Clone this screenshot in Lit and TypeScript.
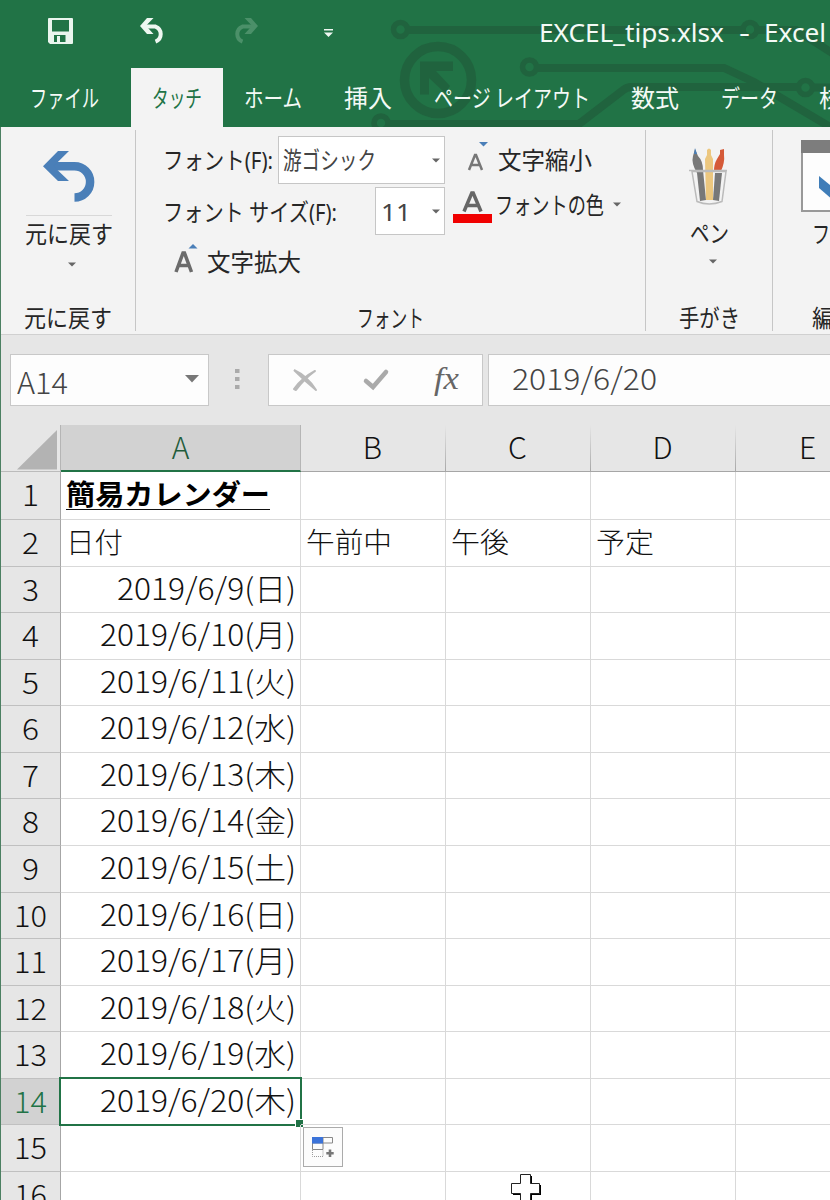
import { LitElement, html, css, svg } from "lit";
import { customElement, property } from "lit/decorators.js";

/** A single line of text whose advance width is set in pixels. */
@customElement("fit-text")
class FitText extends LitElement {
  @property({ type: Number }) w = 100;
  static styles = css`
    :host { display: block; flex: none; white-space: nowrap; overflow: visible; }
    .t { display: inline-block; transform-origin: 0 50%; white-space: pre; }
  `;
  render() {
    return html`<div style="width:${this.w}px"><span class="t"><slot></slot></span></div>`;
  }
  firstUpdated() {
    const t = this.renderRoot.querySelector(".t") as HTMLElement;
    const fit = () => {
      t.style.transform = "none";
      const n = t.getBoundingClientRect().width;
      if (n) t.style.transform = `scaleX(${this.w / n})`;
    };
    fit();
    document.fonts.ready.then(fit);
  }
}

const days: [string, number][] = [
  ["2019/6/9(日)", 179], ["2019/6/10(月)", 196], ["2019/6/11(火)", 196], ["2019/6/12(水)", 196],
  ["2019/6/13(木)", 196], ["2019/6/14(金)", 196], ["2019/6/15(土)", 196], ["2019/6/16(日)", 196],
  ["2019/6/17(月)", 196], ["2019/6/18(火)", 196], ["2019/6/19(水)", 196], ["2019/6/20(木)", 196],
];

const caret = html`<svg class="caret" width="8" height="5" viewBox="0 0 8 5"><path d="M0 .5H8L4 4.5Z" fill="#666"/></svg>`;

@customElement("app-root")
class AppRoot extends LitElement {
  static styles = css`
    :host { display: block; width: 830px; height: 1200px; overflow: hidden; background: #fff;
      font-family: "Noto Sans", "Noto Sans CJK JP", sans-serif; color: #262626; }
    * { box-sizing: border-box; }
    svg { display: block; flex: none; overflow: visible; }
    .head { position: relative; height: 127px; background: #217346; color: #f4faf6; overflow: hidden; }
    .circuit { position: absolute; left: 0; top: 0; }
    .bar { position: relative; display: flex; height: 68px; align-items: flex-start; }
    .save { margin: 18px 0 0 48px; }
    .undo { margin: 18px 0 0 67px; }
    .redo { margin: 18px 0 0 66px; }
    .more { margin: 29px 0 0 66px; }
    .title { display: flex; margin: 14px 0 0 206px; font-size: 25px; line-height: 36px; }
    .dash { margin-left: 15px; }
    .app { margin-left: 14px; }
    .tabs { position: relative; display: flex; height: 59px; line-height: 57px; font-size: 24px;
      font-family: "Noto Sans CJK JP", sans-serif; }
    .tab { flex: none; display: flex; }
    .tab.file { width: 131px; padding-left: 30px; }
    .tab.on { width: 92px; padding-left: 21px; background: #f3f3f3; color: #217346; }
    .tab.home { width: 121px; padding-left: 21px; }
    .tab.ins { width: 90px; }
    .tab.page { width: 197px; }
    .tab.form { width: 90px; }
    .tab.data { width: 98px; }
    .body { border-left: 1px solid #4c8062; }
    .ribbon { display: flex; height: 208px; background: #f3f3f3; border-bottom: 1px solid #d0d0d0; padding-top: 3px; font-size: 24px; line-height: 34px; }
    .g { flex: none; height: 201px; border-right: 1px solid #c6c6c6; display: flex; flex-direction: column; }
    .g1 { width: 135px; }
    .g2 { width: 510px; }
    .g3 { width: 127px; }
    .g4 { width: 58px; border: 0; }
    .undobig { margin: 21px 0 0 42px; }
    .rule { height: 1px; width: 86px; margin: 13px 0 0 25px; background: #d8d8d8; }
    .b1 { margin: 1px 0 0 24px; }
    .g1 .caret { margin: 11px 0 0 67px; }
    .lab { margin-top: auto; margin-bottom: -4px; }
    .g1 .lab { padding-left: 23px; }
    .g2 .lab { padding-left: 221px; }
    .g3 .lab { padding-left: 33px; }
    .g4 .lab { padding-left: 39px; }
    .cols { display: flex; }
    .left { width: 309px; flex: none; }
    .line1 { display: flex; height: 54px; padding: 6px 0 0 27px; justify-content: space-between; }
    .line1 > fit-text { margin-top: 7px; }
    .line2 { display: flex; height: 54px; padding: 3px 0 0 27px; justify-content: space-between; }
    .line2 .l { margin-top: 8px; }
    .line3 { display: flex; padding: 5px 0 0 38px; }
    .line3 fit-text { margin-left: 10px; margin-top: 2px; }
    .box { display: flex; height: 48px; border: 1px solid #c6c6c6; background: #fff; justify-content: space-between; color: #444; }
    .box .caret { margin: 21px 4px 0 0; }
    .box.name { width: 167px; padding-left: 4px; }
    .box.name fit-text { margin-top: 6px; }
    .box.size { width: 70px; padding-left: 5px; }
    .box.size fit-text { margin-top: 7px; }
    .right { padding-left: 8px; }
    .r1 { display: flex; padding: 12px 0 0 14px; }
    .r1 fit-text { margin: 1px 0 0 11px; }
    .r2 { display: flex; padding-top: 12px; }
    .r2 fit-text { margin-left: 3px; margin-top: -1px; }
    .r2 .caret { margin: 13px 0 0 9px; }
    .pens { margin: 17px 0 0 43px; }
    .g3 .b { margin: 11px 0 0 44px; }
    .g3 .caret { margin: 9px 0 0 63px; }
    .win { margin: 10px 0 0 28px; }
    .g4 .b { margin: 5px 0 0 39px; }
    .fbar { display: flex; height: 90px; background: #e6e6e6; padding: 19px 0 0 9px; color: #444;
      font-family: "Noto Sans CJK JP", sans-serif; font-weight: 300; font-size: 30px; line-height: 50px; }
    .fb { height: 52px; border: 1px solid #c8c8c8; background: #fdfdfd; display: flex; flex: none; }
    .nm { width: 199px; padding: 1px 9px 0 6px; justify-content: space-between; }
    .nm svg { margin-top: 19px; }
    .dots { margin: 15px 0 0 26px; }
    .ops { width: 215px; margin-left: 28px; padding-left: 24px; }
    .ops .x { margin-top: 14px; }
    .ops .c { margin: 15px 0 0 47px; }
    .fx { font: italic 31px/48px "Liberation Serif", serif; color: #666; margin-left: 46px; }
    .val { width: 400px; margin-left: 5px; padding-left: 23px; }
    .val fit-text { margin-top: -3px; }
    .sheet { display: grid; grid-template-columns: 60px 240px 145px 145px 145px 145px; grid-template-rows: 47px 48px;
      grid-auto-rows: 46.57px; font-family: "Noto Sans CJK JP", sans-serif; font-weight: 300; font-size: 30px; color: #111; width: 880px; margin-left: -1px; border-left: 1px solid #4c8062; }
    .ch { background: linear-gradient(#e6e6e6,#a8a8a8) right / 1px 100% no-repeat #e6e6e6; border-bottom: 1px solid #a6a6a6;
      line-height: 42px; text-align: center; font-size: 30px; padding-right: 2px; }
    .ch.on { background: #d2d2d2; border-bottom: 2px solid #217346; border-right: 1px solid #b5b5b5; color: #1f5c3b; padding: 0; }
    .corner { background: #e6e6e6; border-right: 1px solid #b5b5b5; border-bottom: 1px solid #bbb; padding: 5px 0 0 16px; }
    .rh { background: #e6e6e6; border-right: 1px solid #a6a6a6; border-bottom: 1px solid #c0c0c0; display: flex; justify-content: center; line-height: 42px; }
    .rh.on { background: #d2d2d2; color: #217346; }
    .cell { border-right: 1px solid #d9d9d9; border-bottom: 1px solid #d9d9d9; line-height: 40px; position: relative; }
    .date { display: flex; justify-content: flex-end; padding-right: 4px; }
    .txt { padding-left: 5px; font-size: 28px; line-height: 42px; }
    .head1 { font-weight: 700; font-size: 28px; padding-left: 5px; color: #000; line-height: 43px; }
    .head1 fit-text { width: 204px; height: 38px; border-bottom: 1px solid #111; }
    .sel { position: absolute; left: -2px; top: -2px; right: -2px; bottom: -2px; border: 2px solid #217346; }
    .knob { position: absolute; right: -3px; bottom: -3px; width: 8px; height: 8px; background: #217346; border: solid #fff; border-width: 1px 0 0 1px; }
    .fill { position: absolute; left: 2px; top: 2px; width: 40px; height: 40px; border: 1px solid #ababab; background: #fcfcfc; z-index: 2; padding: 9px 0 0 8px; }
    .cursor { position: absolute; left: 64px; top: 1px; z-index: 3; }
  `;

  cell(r: number, c: number) {
    if (c === 0) {
      if (r === 1) return html`<div class="cell head1"><fit-text w="204">簡易カレンダー</fit-text></div>`;
      if (r === 2) return html`<div class="cell txt"><fit-text w="57">日付</fit-text></div>`;
      if (r >= 3 && r <= 14) {
        const [s, w] = days[r - 3];
        return html`<div class="cell date"><fit-text .w=${w}>${s}</fit-text>${r === 14 ? html`<div class="sel"></div><div class="knob"></div>` : ""}</div>`;
      }
    }
    if (r === 2 && c < 4) return html`<div class="cell txt"><fit-text .w=${c === 1 ? 86 : 58}>${["", "午前中", "午後", "予定"][c]}</fit-text></div>`;
    if (r === 15 && c === 1)
      return html`<div class="cell"><div class="fill"><svg width="24" height="22" viewBox="0 0 24 22" fill="none" stroke="#999">
        <path d="M.5 .5H20.500V6H.5ZM.5 6V12.500H11V.5" stroke="#888"/><path d="M0 0H11V6.500H0Z" fill="#3b73d9" stroke="none"/>
        <path d="M.5 13V19.500H11V13" stroke-dasharray="1 1"/><path d="M18 12.500V20M14.300 16.200H21.700" stroke="#777" stroke-width="2.600"/></svg></div></div>`;
    if (r === 16 && c === 2)
      return html`<div class="cell"><svg class="cursor" width="32" height="32" viewBox="0 0 32 32">
        <path d="M12 3H22V12H31V22H22V31H12V22H3V12H12Z" fill="#000"/><path d="M10.500 1.500H20.500V10.500H29.500V20.500H20.500V29.500H10.500V20.500H1.500V10.500H10.500Z" fill="#fff" stroke="#222"/></svg></div>`;
    return html`<div class="cell"></div>`;
  }

  render() {
    const rows = Array.from({ length: 16 }, (_, i) => i + 1);
    const ring = (x: number, y: number) => svg`<circle cx=${x} cy=${y} r="7" stroke-width="5.500"/>`;
    return html`
      <div class="head">
        <svg class="circuit" width="830" height="127" fill="none" stroke="#20633e" stroke-width="8">
          ${ring(400.5, 29.5)}${ring(750, 29.5)}${ring(529.5, 67)}${ring(805.500, 87.500)}${ring(381, 123)}
          <path d="M408 30H743M757 30H796L832 53M537 68H724L754 82L832 128M387 124H579L622 91Q626 87 632 87H799M813 87.500H830"/>
          <circle cx="438" cy="80" r="33.500" stroke-width="9.500"/>
          <path d="M420 61.500H453V71H436L450 86L445 93L429 78V94.500H420Z" fill="#20633e" stroke="none"/>
        </svg>
        <div class="bar">
          <svg class="save" width="25" height="26" viewBox="0 0 25 26"><path fill="#eaf5ee" fill-rule="evenodd" d="M1 0H24Q25 0 25 1V25Q25 26 24 26H2L0 24V1Q0 0 1 0ZM4 2V13.500H21V2ZM6 17V24H9V18H12V24H17.500V17Z"/></svg>
          <svg class="undo" width="26" height="26" viewBox="0 0 26 26" fill="none" stroke="#eef7f1"><path d="M4 8.500H15.500A8 8 0 0 1 15.500 23.500" stroke-width="4"/><path d="M7 0H13.500L6 7.800L13.500 16H7L0 8Z" fill="#eef7f1" stroke="none"/></svg>
          <svg class="redo" width="26" height="26" viewBox="0 0 26 26" fill="none" stroke="#4b9069"><path d="M22 8.500H10.500A8 8 0 0 0 10.500 23.500" stroke-width="4"/><path d="M19 0H12.500L20 7.800L12.500 16H19L26 8Z" fill="#4b9069" stroke="none"/></svg>
          <svg class="more" width="9" height="9" viewBox="0 0 9 9" fill="#eef7f1"><path d="M0 0H9V1.500H0ZM0 3.500H9L4.500 8Z"/></svg>
          <div class="title"><fit-text w="185">EXCEL_tips.xlsx</fit-text><fit-text class="dash" w="11">-</fit-text><fit-text class="app" w="62">Excel</fit-text></div>
        </div>
        <div class="tabs">
          <div class="tab file"><fit-text w="69">ファイル</fit-text></div>
          <div class="tab on"><fit-text w="50">タッチ</fit-text></div>
          <div class="tab home"><fit-text w="58">ホーム</fit-text></div>
          <div class="tab ins"><fit-text w="48">挿入</fit-text></div>
          <div class="tab page"><fit-text w="156">ページ レイアウト</fit-text></div>
          <div class="tab form"><fit-text w="48">数式</fit-text></div>
          <div class="tab data"><fit-text w="57">データ</fit-text></div>
          <div class="tab"><fit-text w="48">校閲</fit-text></div>
        </div>
      </div>
      <div class="body">
        <div class="ribbon">
          <div class="g g1">
            <svg class="undobig" width="51" height="51" viewBox="0 0 51 51"><path d="M10 15.300H31.500A15.300 15.300 0 0 1 31.500 46.500" fill="none" stroke="#4a7fb8" stroke-width="8.500"/><path d="M15 0H26L10.500 15.300L26 30H15L0 15.300Z" fill="#4a7fb8"/></svg>
            <div class="rule"></div>
            <fit-text class="b1" w="88">元に戻す</fit-text>
            ${caret}
            <div class="lab"><fit-text w="88">元に戻す</fit-text></div>
          </div>
          <div class="g g2">
            <div class="cols">
              <div class="left">
                <div class="line1"><fit-text w="110">フォント(F):</fit-text><div class="box name"><fit-text w="93">游ゴシック</fit-text>${caret}</div></div>
                <div class="line2"><fit-text class="l" w="174">フォント サイズ(F):</fit-text><div class="box size"><fit-text w="30">11</fit-text>${caret}</div></div>
                <div class="line3">
                  <svg width="23" height="29" viewBox="0 0 23 29"><path d="M14.500 5.500L19 1L23.500 5.500Z" fill="#4a7fb8"/><path d="M2 29L9 10H10.500L17.500 29M4.500 22.500H15" fill="none" stroke="#6b6b6b" stroke-width="3.500"/></svg>
                  <fit-text w="94">文字拡大</fit-text>
                </div>
              </div>
              <div class="right">
                <div class="r1">
                  <svg width="20" height="29" viewBox="0 0 20 29"><path d="M12 0H21L16.500 4.500Z" fill="#4a7fb8"/><path d="M2 28L8 13H9L15 28M4 23H13" fill="none" stroke="#777" stroke-width="2.500"/></svg>
                  <fit-text w="94">文字縮小</fit-text>
                </div>
                <div class="r2">
                  <svg width="39" height="34" viewBox="0 0 39 34"><path d="M11 22.500L18.800 4H20.200L28 22.500M14 16.500H25" fill="none" stroke="#666" stroke-width="3.500"/><path d="M0 25H39V34H0Z" fill="#f00000"/></svg>
                  <fit-text w="109">フォントの色</fit-text>${caret}
                </div>
              </div>
            </div>
            <div class="lab"><fit-text w="67">フォント</fit-text></div>
          </div>
          <div class="g g3">
            <svg class="pens" width="40" height="58" viewBox="0 0 40 58">
              <path d="M4 9L6 2L9 9Q14 14 14 23L17 53L11 54L8 26Q2 16 4 9Z" fill="#787878"/><path d="M5 7L6 1L8 7Z" fill="#4a7fb8"/>
              <path d="M26 26L24 53L30 54L33 26Z" fill="#787878"/><path d="M16 12L18 8V3Q20 0 22 3V8L24 12V53H17Z" fill="#ecc77f"/>
              <path d="M28 12L31 7V3L35 2V8Q36 15 32 24H25Q25 17 28 12Z" fill="#d55a38"/>
              <path d="M3 24H37L33 54Q20 59 8 54ZM0 23H38" transform="translate(0 .5)" fill="none" stroke="#bbb" stroke-width="1.500"/>
            </svg>
            <fit-text class="b" w="39">ペン</fit-text>
            ${caret}
            <div class="lab"><fit-text w="61">手がき</fit-text></div>
          </div>
          <div class="g g4">
            <svg class="win" width="60" height="72" viewBox="0 0 60 72"><path d="M1 1H70V71H1Z" fill="#fdfdfd" stroke="#999" stroke-width="2"/><path d="M0 0H60V13H0Z" fill="#7d7d7d"/><path d="M18 36L40 54V67L18 48Z" fill="#3f7db8"/></svg>
            <fit-text class="b" w="54">フィル</fit-text>
            <div class="lab"><fit-text w="46">編集</fit-text></div>
          </div>
        </div>
        <div class="fbar">
          <div class="fb nm"><fit-text w="51">A14</fit-text><svg width="14" height="8" viewBox="0 0 14 8"><path d="M0 0H14L7 7.500Z" fill="#777"/></svg></div>
          <svg class="dots" width="5" height="21" viewBox="0 0 5 21"><path d="M0 0H4.500V4H0ZM0 8H4.500V12H0ZM0 16H4.500V20H0Z" fill="#aaa"/></svg>
          <div class="fb ops">
            <svg class="x" width="24" height="22" viewBox="0 0 24 22"><path d="M1 1Q14 7 23 21Q12 12 1 1M1 20Q9 9 22 2Q11 10 3 21Z" fill="#b9b9b9" stroke="#b9b9b9" stroke-width="2" stroke-linejoin="round"/></svg>
            <svg class="c" width="24" height="20" viewBox="0 0 24 20"><path d="M2 11L9 17L22 2" fill="none" stroke="#aaa" stroke-width="4.500" stroke-linecap="round"/></svg>
            <fit-text class="fx" w="25">fx</fit-text>
          </div>
          <div class="fb val"><fit-text w="145">2019/6/20</fit-text></div>
        </div>
        <div class="sheet">
          <div class="corner"><svg width="40" height="40" viewBox="0 0 40 40"><path d="M0 39.500H40V0Z" fill="#b3b3b3"/></svg></div>
          <div class="ch on">A</div><div class="ch">B</div><div class="ch">C</div><div class="ch">D</div><div class="ch">E</div>
          ${rows.map((r) => html`<div class="rh ${r === 14 ? "on" : ""}"><fit-text .w=${r > 9 ? 33 : 17}>${r}</fit-text></div>${[0, 1, 2, 3, 4].map((c) => this.cell(r, c))}`)}
        </div>
      </div>`;
  }
}
